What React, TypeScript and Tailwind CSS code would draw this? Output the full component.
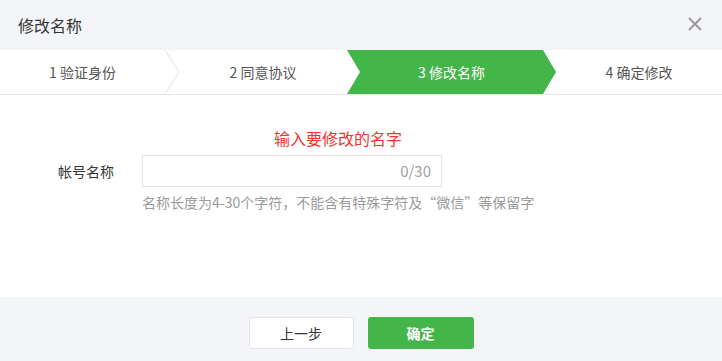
import React from "react";

const FONT = "font-['Microsoft_YaHei','Noto_Sans_CJK_SC','Liberation_Sans',sans-serif]";

export default function App() {
  return (
    <div className={`w-[722px] h-[361px] flex flex-col bg-white ${FONT}`}>
      {/* header */}
      <div className="h-[50px] shrink-0 flex items-center justify-between bg-[#f4f5f9] pl-[18px] pr-[19px]">
        <div className="text-[16px] text-[#353535] leading-6">修改名称</div>
        <svg width="16" height="16" viewBox="0 0 16 16" className="text-[#9a9a9a] -mt-[3px]">
          <path d="M2 2L14 14M14 2L2 14" stroke="currentColor" strokeWidth="2" />
        </svg>
      </div>

      {/* steps */}
      <div className="h-[45px] shrink-0 flex border-b border-[#e7e7eb] text-[14px] text-[#555]">
        <div className="w-[165px] flex items-center justify-center">1 验证身份</div>
        <svg width="14" height="44" viewBox="0 0 14 44" className="shrink-0">
          <path d="M0 0L14 22L0 44" fill="none" stroke="#e4e4e4" strokeWidth="1" />
        </svg>
        <div className="w-[168px] flex items-center justify-center">2 同意协议</div>
        <div className="w-[209px] flex items-center justify-center bg-[#44b549] text-white px-[13px] [clip-path:polygon(0_0,196px_0,100%_50%,196px_100%,0_100%,13px_50%)]">
          3 修改名称
        </div>
        <div className="flex-1 flex items-center justify-center">4 确定修改</div>
      </div>

      {/* body */}
      <div className="flex-1 pt-[31px]">
        <div className="pl-[274px] text-[16px] leading-6 text-[#f33333]">输入要修改的名字</div>
        <div className="flex items-center mt-[5px] pl-[58px]">
          <div className="w-[84px] text-[14px] text-[#353535]">帐号名称</div>
          <div className="w-[300px] h-[32px] border border-[#e4e4e4] flex items-center justify-end pr-[10px] text-[15px] text-[#a0a0a0]">
            0/30
          </div>
        </div>
        <div className="mt-[5px] pl-[142px] text-[14px] leading-5 text-[#9a9a9a]">
          名称长度为4-30个字符，不能含有特殊字符及“微信”等保留字
        </div>
      </div>

      {/* footer */}
      <div className="h-[64px] shrink-0 bg-[#f4f5f9] flex items-start justify-center gap-[14px] pt-[20px]">
        <button className="w-[105px] h-[32px] rounded-[3px] bg-white border border-[#e4e4e8] text-[14px] text-[#353535]">
          上一步
        </button>
        <button className="w-[106px] h-[32px] rounded-[3px] bg-[#44b549] text-[14px] text-white font-bold">
          确定
        </button>
      </div>
    </div>
  );
}
